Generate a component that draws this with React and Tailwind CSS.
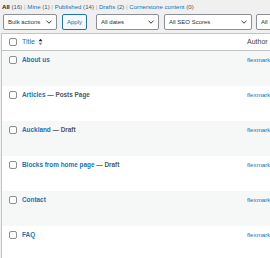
import React from "react";

const Chevron = () => (
  <svg width="6" height="4" viewBox="0 0 6 4" className="shrink-0">
    <path d="M0.5 0.8 L3 3.2 L5.5 0.8" fill="none" stroke="#1d2327" strokeWidth="0.9" />
  </svg>
);

const Select = ({ label, w }) => (
  <div
    className={`${w} h-[16px] shrink-0 flex items-center justify-between pl-[4px] pr-[4px] bg-white border border-[#8c8f94] rounded-[2px] text-[#2c3338]`}
  >
    <span>{label}</span>
    <Chevron />
  </div>
);

const Check = () => (
  <div className="w-[8px] h-[8px] border border-[#8c8f94] rounded-[2px] bg-white" />
);

const rows = [
  { t: "About us", s: "" },
  { t: "Articles", s: " — Posts Page" },
  { t: "Auckland", s: " — Draft" },
  { t: "Blocks from home page", s: " — Draft" },
  { t: "Contact", s: "" },
  { t: "FAQ", s: "" },
];

export default function App() {
  return (
    <div
      className="w-[270px] h-[258px] overflow-hidden bg-[#f0f0f1] text-[7px] text-[#3c434a]"
      style={{ fontFamily: '"Liberation Sans", Arial, sans-serif' }}
    >
      <div className="pl-[2px] pt-[2px] h-[12px] leading-[10px] whitespace-nowrap text-[6.1px]">
        <span className="text-[#1d2327] font-semibold">All</span>
        <span className="text-[#50575e]"> (16)</span>
        <span className="text-[#a7aaad]"> | </span>
        <span className="text-[#2271b1]">Mine</span>
        <span className="text-[#50575e]"> (1)</span>
        <span className="text-[#a7aaad]"> | </span>
        <span className="text-[#2271b1]">Published</span>
        <span className="text-[#50575e]"> (14)</span>
        <span className="text-[#a7aaad]"> | </span>
        <span className="text-[#2271b1]">Drafts</span>
        <span className="text-[#50575e]"> (2)</span>
        <span className="text-[#a7aaad]"> | </span>
        <span className="text-[#2271b1]">Cornerstone content</span>
        <span className="text-[#50575e]"> (0)</span>
      </div>
      <div className="flex items-center pl-[3px] mt-[2px] h-[16px] whitespace-nowrap text-[6px]">
        <Select label="Bulk actions" w="w-[54px]" />
        <div className="ml-[5px] w-[25px] h-[16px] shrink-0 flex items-center justify-center border border-[#2271b1] rounded-[2px] bg-[#f6f7f7] text-[#2271b1]">
          Apply
        </div>
        <div className="ml-[9px]">
          <Select label="All dates" w="w-[63px]" />
        </div>
        <div className="ml-[5px]">
          <Select label="All SEO Scores" w="w-[88px]" />
        </div>
        <div className="ml-[4px]">
          <Select label="All" w="w-[60px]" />
        </div>
      </div>
      <div className="mt-[3px] ml-[1px] w-[300px] bg-white border border-[#c3c4c7]">
        <div className="flex items-center h-[17px] border-b border-[#c3c4c7]">
          <div className="w-[20px] flex justify-center pl-[1px]">
            <Check />
          </div>
          <div className="w-[225px] flex items-center text-[#2271b1]">
            <span>Title</span>
            <svg width="5" height="8" viewBox="0 0 5 8" className="ml-[3px]">
              <path d="M0.5 3.3 L2.5 0.8 L4.5 3.3 Z" fill="#1d2327" />
              <path d="M0.5 4.7 L2.5 7.2 L4.5 4.7 Z" fill="#8c8f94" />
            </svg>
          </div>
          <div className="text-[#3c434a]">Author</div>
        </div>
        {rows.map((r, i) => (
          <div
            key={i}
            className={`flex items-start h-[35px] pt-[4px] ${i % 2 === 0 ? "bg-[#f6f7f7]" : "bg-white"}`}
          >
            <div className="w-[20px] flex justify-center pl-[1px] pt-[1px]">
              <Check />
            </div>
            <div className="w-[225px] leading-[10px] whitespace-nowrap text-[6.4px]">
              <span className="text-[#2271b1] font-semibold">{r.t}</span>
              {r.s && <span className="text-[#50575e] font-semibold">{r.s}</span>}
            </div>
            <div className="leading-[10px] text-[#2271b1] text-[6.2px]">flexmark</div>
          </div>
        ))}
      </div>
    </div>
  );
}
